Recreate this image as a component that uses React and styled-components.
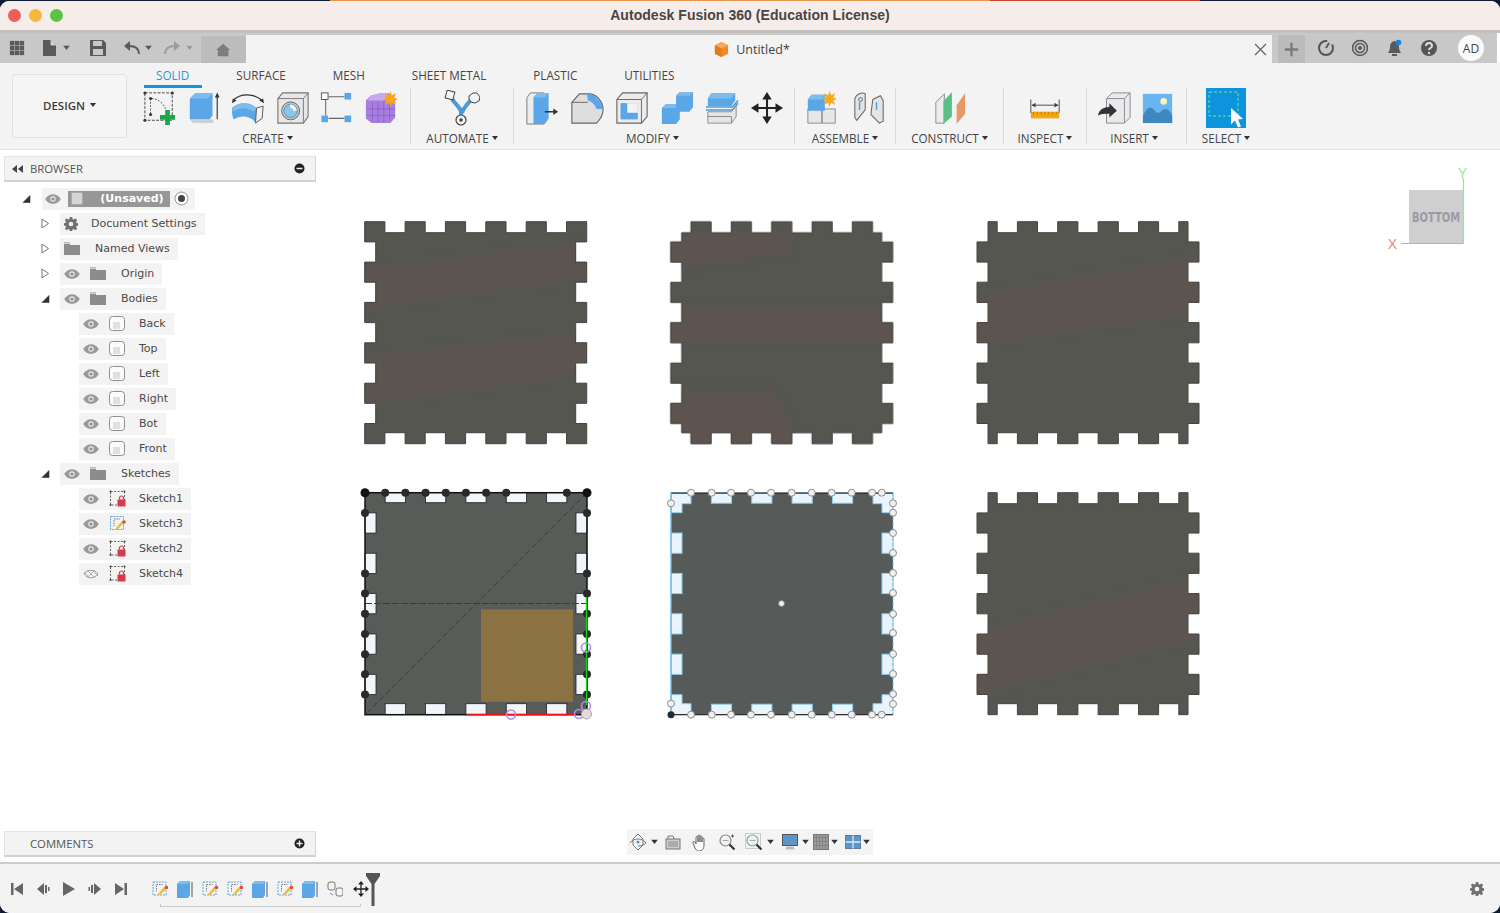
import React from "react";
import styled, { createGlobalStyle } from "styled-components";

const Global = createGlobalStyle`
  html, body { margin: 0; padding: 0; height: 100%; overflow: hidden; }
  body {
    background: linear-gradient(90deg, #0c1c33 0 22%, #e8964a 22% 66%, #c2452c 66% 80%, #0c1c33 80% 100%);
    font-family: "Open Sans", "Liberation Sans", sans-serif;
  }
  #root { height: 913px; }
`;

const Win = styled.div`
  width: 1500px; height: 912px; margin-top: 1px; display: flex; flex-direction: column;
  background: #fff; border-radius: 9px 9px 10px 10px; overflow: hidden;
`;
const TitleBar = styled.div`
  height: 29px; background: #f6edea; position: relative; display: flex; align-items: center; justify-content: center;
  border-bottom: 3px solid #c4c2c0;
`;
const Lights = styled.div`
  position: absolute; left: 8px; top: 8px; display: flex; gap: 8px;
`;
const Light = styled.span`
  width: 13px; height: 13px; border-radius: 50%; background: ${p => p.$c};
`;
const Title = styled.div`
  font: bold 14px "Liberation Sans", sans-serif; letter-spacing: .05px; color: #4a4542; margin-top: -2px;
`;
const TopRow = styled.div`
  height: 30px; display: flex; background: #c8c8c8; margin-right: 3px; box-shadow: 3px 0 0 #fff;
`;
const QuickBar = styled.div`
  width: 246px; display: flex; align-items: center; flex: none; position: relative;
`;
const QuickSlot = styled.span`
  position: absolute; left: ${p => p.$x}px; top: 50%; transform: translate(-50%, -50%); display: flex;
`;
const HomeTab = styled.div`
  position: absolute; left: 201px; width: 45px; top: 3px; bottom: 0; background: #bcbcbc; display: flex; align-items: center; justify-content: center;
`;
const DocTab = styled.div`
  flex: 1; margin-top: 2px; background: #f3f3f3; display: flex; align-items: center; justify-content: center; gap: 6px;
  position: relative; font-size: 12.5px; color: #444; padding-right: 15px;
`;
const CloseX = styled.span`
  position: absolute; right: 5px; top: 8px; display: flex;
`;
const RightBar = styled.div`
  width: 225px; position: relative; flex: none;
`;
const PlusTab = styled.div`
  position: absolute; left: 6px; width: 27px; top: 2px; bottom: 0; background: #bbb; display: flex; align-items: center; justify-content: center;
`;
const Avatar = styled.div`
  position: absolute; left: 186px; top: 2px; width: 26px; height: 26px; border-radius: 50%; background: #fafafa;
  display: flex; align-items: center; justify-content: center; font-size: 12px; color: #444;
`;
const Ribbon = styled.div`
  height: 87px; background: #f3f3f3; display: flex; flex: none; border-bottom: 1px solid #e6e6e6; box-sizing: border-box;
`;
const DesignBtn = styled.div`
  width: 113px; height: 60px; padding-bottom: 2px; margin: 11px 0 0 12px; border: 1px solid #e2e2e2; border-radius: 3px;
  display: flex; align-items: center; justify-content: center; gap: 5px; font-size: 11.5px; font-weight: 600; color: #3c3c3c; flex: none; background: #f5f5f5;
`;
const RibbonMain = styled.div`
  display: flex; flex-direction: column; margin-left: 13px;
`;
const Tabs = styled.div`
  display: flex; gap: 47px; height: 25px; padding: 5px 0 0 16px; box-sizing: border-box;
`;
const Tab = styled.span`
  font-size: 11.7px; line-height: 14px; color: ${p => p.$on ? "#1e9ad8" : "#444"}; position: relative; white-space: nowrap;
  ${p => p.$on && `&::after { content: ""; position: absolute; left: -12px; right: -13px; top: 17px; height: 3px; background: #0f96dc; }`}
`;
const Groups = styled.div`
  display: flex;
`;
const Group = styled.div`
  width: ${p => p.$w}px; box-sizing: border-box; height: 56px; display: flex; flex-direction: column; align-items: center;
  padding-right: ${p => p.$pr || 0}px;
  ${p => !p.$last && "border-right: 1px solid #d9d9d9;"}
`;
const GroupIcons = styled.div`
  height: 40px; flex: none; display: flex; gap: ${p => p.$gap || 11}px; align-items: center;
`;
const GroupLabel = styled.div`
  font-size: 11.7px; line-height: 14px; color: #444; margin-top: 3px; margin-right: ${p => p.$mr || 0}px; display: flex; align-items: center; gap: 3px; white-space: nowrap;
`;
const Caret = styled.i`
  display: inline-block; width: 0; height: 0; border-left: 3px solid transparent; border-right: 3px solid transparent; border-top: 4px solid #333;
`;
const Workspace = styled.div`
  flex: 1; position: relative; display: flex; flex-direction: column; justify-content: space-between; min-height: 0;
`;
const Viewport = styled.svg`
  position: absolute; left: 0; top: 0; width: 1500px; height: 712px;
`;
const Side = styled.div`
  position: relative; width: 312px; margin-left: 4px;
`;
const PanelHead = styled.div`
  height: 26px; background: #f3f3f3; border: 1px solid #e4e4e4; border-bottom: 2px solid #d2d2d2; border-right-color: #d2d2d2; box-sizing: border-box;
  display: flex; align-items: center; font-size: 11.3px; color: #555; padding: 0 10px 0 7px; margin-top: ${p => p.$top || 0}px; margin-bottom: ${p => p.$bottom || 0}px;
  position: relative;
`;
const HeadLabel = styled.span` margin-left: ${p => p.$ml}px; flex: 1; `;
const Tree = styled.div`
  margin: 4px 0 0 -4px; font: 11px "DejaVu Sans", sans-serif; color: #4a4a4a;
`;
const Row = styled.div`
  height: 25px; display: flex; align-items: center; padding-left: ${p => p.$indent}px;
`;
const ArrowSlot = styled.span`
  width: ${p => p.$w}px; display: flex; flex: none;
`;
const Chip = styled.div`
  height: 22px; background: #f3f3f3; display: flex; align-items: center; padding: 0 ${p => p.$pr || 8}px 0 ${p => p.$pl || 4}px; white-space: nowrap;
`;
const Label = styled.span` margin-left: ${p => p.$ml}px; `;
const IconGap = styled.span` display: flex; margin-left: ${p => p.$ml || 0}px; `;
const Unsaved = styled.span`
  margin-left: 7px; width: 102px; height: 16px; background: #979797; color: #fff; font-weight: bold; position: relative;
  display: flex; align-items: center; justify-content: center; padding-left: 26px; box-sizing: border-box;
`;
const UnsavedIcon = styled.span`
  position: absolute; left: 3px; top: 1px; width: 12px; height: 13px; background: #d5d5d5; border-radius: 2px; border: 1px solid #aaa; box-sizing: border-box;
`;
const NavBar = styled.div`
  position: absolute; left: 627px; top: 679px; width: 246px; height: 26px; background: #f4f4f4; display: block;
`;
const NavSlot = styled.span`
  position: absolute; left: ${p => p.$x}px; top: 13px; transform: translate(-50%, -50%); display: flex;
`;
const Timeline = styled.div`
  height: 51px; flex: none; background: #f3f3f3; border-top: 2px solid #cbcbcb; box-sizing: border-box; position: relative;
`;
const TimeTrack = styled.div`
  position: absolute; left: 160px; width: 201px; top: 40px; border: 1px solid #c9c9c9; border-top: 0; height: 3px; box-sizing: border-box;
`;
const TimeSlot = styled.span`
  position: absolute; left: ${p => p.$x}px; top: 25px; transform: translate(-50%, -50%); display: flex;
`;
const Marker = styled.span`
  position: absolute; left: 366px; top: 9px; display: flex;
`;

const Svg = ({ s = 34, w, h, vb, children }) => (
  <svg width={w || s} height={h || s} viewBox={vb || `0 0 ${w || s} ${h || s}`} style={{ display: "block", flex: "none" }}>{children}</svg>
);

/* ---- Ribbon icons ---- */
const I = ({ children }) => <Svg s={34} vb="0 0 36 36">{children}</Svg>;
const BL = "#5aa6e6";
const BL2 = "#7dbdec";
const IconSketch = () => (
  <I>
    <rect x="2" y="2" width="29" height="29" fill="none" stroke="#444" strokeWidth="1" strokeDasharray="3 1.5" />
    <path d="M8 8v17h1M8 25 M9 8c8 0 14 7 15 12" fill="none" stroke="#555" strokeDasharray="2 1.5" />
    {[[2,2],[31,2],[2,31],[8,8],[8,25]].map(([x,y],i)=><circle key={i} cx={x} cy={y} r="1.6" fill="#333"/>)}
    <path d="M23.5 20h5v5.5h5.5v5h-5.5v5.500h-5v-5.500H18v-5h5.500z" fill="#18a84a" />
  </I>
);
const IconExtrude = () => (
  <I>
    <path d="M3 30l3 4h22v-4z" fill="#cfcfcf" />
    <path d="M3 8l6-6h18v24l-3 4H3z" fill={BL} />
    <path d="M3 8l6-6h18l-5 6z" fill={BL2} />
    <path d="M32 30V5" stroke="#333" strokeWidth="1.2" />
    <path d="M29.500 7L32 1.500 34.500 7z" fill="#333" />
  </I>
);
const IconSweep = () => (
  <I>
    <path d="M2 10C10 2 24 2 33 10" fill="none" stroke="#333" strokeWidth="1.300" />
    <path d="M1 13l1-5 4 2zM35 13l-1-5-4 2z" fill="#333" />
    <path d="M1 18c7-7 20-7 27 1l-2 15C22 26 10 25 3 30c-2-3-2-9-2-12z" fill={BL} />
    <path d="M1 18c7-7 20-7 27 1l-5 3c-5-5-14-5-21 0z" fill={BL2} />
    <path d="M27 18l7-2-1 13-7 5z" fill="#f4f4f4" stroke="#555" />
  </I>
);
const IconHole = () => (
  <I>
    <path d="M2 8l5-6h27v25l-5 7H2z" fill="#e7e7e7" stroke="#777" strokeWidth="1.200" />
    <path d="M2 8h27v26M29 8l5-6" fill="none" stroke="#777" />
    <circle cx="15.500" cy="21" r="9.500" fill="#c6c6c6" stroke="#666" />
    <circle cx="15.500" cy="21" r="7" fill="#8fc4ea" stroke="#4a8fc5" />
    <path d="M15 14a7 7 0 017 7h-4c0-2-1-3-3-3z" fill="#f2f2f2" />
  </I>
);
const IconBoxes = () => (
  <I>
    <path d="M9 6h17M6 9v17M9 29h17" stroke="#666" strokeWidth="1.100" />
    <rect x="1.500" y="2" width="7" height="7" fill="#fff" stroke="#555" />
    <rect x="26" y="2" width="7" height="7" fill={BL} />
    <rect x="1.500" y="26" width="7" height="7" fill={BL} />
    <rect x="26" y="26" width="7" height="7" fill={BL} />
  </I>
);
const IconForm = () => (
  <I>
    <path d="M7 5l11-3h8l7 8v18l-5 6H8l-6-5V10z" fill="#a77fe0" />
    <path d="M9 12v20M15 11v22M21 11v22M27 13v18M3 19h30M3 26h30" stroke="#8a5fc9" strokeWidth=".9" />
    <path d="M7 5l11-3h8l-4 8H4z" fill="#c8a9f0" />
    <path d="M28 0l1.500 4.500L34 2.500 32 7l4 1.500L32 10l2 4.500-4.500-2L28 17l-1.500-4.500-4.500 2L24 10l-4-1.500L24 7l-2-4.500 4.500 2z" fill="#f7a81b" />
  </I>
);
const IconAutomate = () => (
  <Svg s={36} vb="0 0 36 36">
    <path d="M7 7c4 8 9 9 10 15M28 8c-5 8-8 8-10 15" fill="none" stroke="#4d9ad8" strokeWidth="4" />
    <path d="M17 21v8" stroke="#4d9ad8" strokeWidth="4" />
    <rect x="2" y="1" width="8" height="8" fill="#f4f4f4" stroke="#444" transform="rotate(15 6 5)" />
    <path d="M25 6l4-3h4l3 4-1 4-4 2-4-1-2-3z" fill="#f4f4f4" stroke="#444" />
    <circle cx="17" cy="30" r="5" fill="#f4f4f4" stroke="#444" strokeWidth="1.200" />
    <circle cx="17" cy="30" r="1.800" fill="#444" />
  </Svg>
);
const IconPress = () => (
  <I>
    <path d="M2 7l4-5h14v33H2z" fill="#ececec" stroke="#777" />
    <path d="M9 7l4-5h12v27l-4 6H9z" fill={BL} />
    <path d="M9 7l4-5h12l-4 5z" fill={BL2} />
    <path d="M21 22h11" stroke="#333" strokeWidth="1.500" />
    <path d="M30 18.500l5 3.500-5 3.500z" fill="#333" />
  </I>
);
const IconFillet = () => (
  <I>
    <path d="M2 12L10 3h10c8 0 15 8 15 17 0 4-2 9-7 14H2z" fill="#dedede" stroke="#666" strokeWidth="1.200" />
    <path d="M18 3c8 0 16 8 17 16h-7c-1-4-5-8-9-9z" fill={BL} />
    <path d="M2 12h17" stroke="#666" />
  </I>
);
const IconShell = () => (
  <I>
    <path d="M2 9l6-7h26v25l-6 7H2z" fill="#ececec" stroke="#666" strokeWidth="1.200" />
    <path d="M2 9h26v25M28 9l6-7" fill="none" stroke="#666" />
    <rect x="6" y="13" width="18" height="17" fill={BL2} />
    <path d="M6 13h7v10h11v7H6z" fill={BL} />
    <rect x="13" y="13" width="11" height="10" fill="#f2f2f2" />
  </I>
);
const IconCombine = () => (
  <I>
    <path d="M2 18l4-4h11V5l4-4h14v16l-4 5H21v8l-4 5H2z" fill={BL} />
    <path d="M17 5l4-4h14l-4 4zM2 18l4-4h11v4z" fill={BL2} />
  </I>
);
const IconSplit = () => (
  <I>
    <path d="M3 8l4-6h25v8l-4 6H3z" fill={BL} />
    <path d="M3 8l4-6h25l-4 6z" fill={BL2} />
    <path d="M1 17h28l6-7M1 20h28l6-7" fill="none" stroke="#4d9ad8" strokeWidth="1.600" />
    <path d="M3 22h25l5-6v11l-5 7H3z" fill="#e6e6e6" stroke="#888" />
    <path d="M3 27h25v7" fill="none" stroke="#888" />
  </I>
);
const IconMove = () => (
  <I>
    <path d="M18 7v22M7 18h22" stroke="#222" strokeWidth="2.200" />
    <path d="M18 1l5 8h-10zM18 35l5-8h-10zM1 18l8-5v10zM35 18l-8-5v10z" fill="#222" />
  </I>
);
const IconNewComp = () => (
  <I>
    <path d="M3 19h15v15H3zM18 19h14v15H18z" fill="#e7e7e7" stroke="#888" />
    <path d="M3 9l4-5h14v17H3z" fill={BL} />
    <path d="M3 9l4-5h14l-3 5z" fill={BL2} />
    <path d="M26 0l1.500 4.500L32 2.500 30 7l4 1.500L30 10l2 4.500-4.500-2L26 17l-1.500-4.500-4.500 2L22 10l-4-1.500L22 7l-2-4.500 4.500 2z" fill="#f7a81b" />
  </I>
);
const IconJoint = () => (
  <I>
    <path d="M3 9c1-6 8-8 11-6v17l-9 11-2-3z" fill="#e4e4e4" stroke="#666" strokeWidth="1.100" />
    <path d="M22 9l8-4 3 5v22l-4 2-9-9z" fill="#e4e4e4" stroke="#666" strokeWidth="1.100" />
    <path d="M8 12v8M26 12v8" stroke="#4d9ad8" strokeWidth="1.500" />
    <circle cx="9" cy="9" r="2" fill="none" stroke="#666" />
  </I>
);
const IconPlane = () => (
  <I>
    <path d="M3 12l9-9v31H3z" fill="#ececec" stroke="#888" />
    <path d="M11 11l9-10v26l-9 8z" fill="#5abf84" />
    <path d="M25 15l9-13v22l-9 11z" fill="#e59a66" />
  </I>
);
const IconMeasure = () => (
  <I>
    <rect x="3" y="22" width="30" height="7" fill="#f3a712" />
    <path d="M6 22v3M10 22v3M14 22v3M18 22v3M22 22v3M26 22v3M30 22v3" stroke="#b97b00" />
    <path d="M3 9v14M33 9v14M4 15h28" stroke="#444" />
    <path d="M4 15l4-2.500v5zM32 15l-4-2.500v5z" fill="#444" />
  </I>
);
const IconDerive = () => (
  <I>
    <path d="M9 8l6-6h19v26l-6 6H9z" fill="#e9e9ee" stroke="#888" />
    <path d="M9 8h19v26M28 8l6-6" fill="none" stroke="#888" />
    <path d="M0 26c1-6 6-9 12-9v-4l8 8-8 7v-4c-5 0-9 0-12 2z" fill="#333" />
  </I>
);
const IconImage = () => (
  <I>
    <rect x="2" y="3" width="31" height="31" fill="#68b6f0" />
    <circle cx="24" cy="11" r="3.500" fill="#fdf3b8" />
    <path d="M2 27c4-10 8-12 12-7 3 4 5 4 8 1 4-4 8-2 11 5v8H2z" fill="#3f87bf" />
  </I>
);
const IconSelect = () => (
  <Svg s={40} vb="0 0 40 40">
    <rect width="40" height="40" fill="#0c94dc" />
    <rect x="3" y="4" width="29" height="24" fill="none" stroke="#7ed6a0" strokeWidth="1" strokeDasharray="3 2" />
    <path d="M25 20l12 11-5 .5 3 7-3 1-3-7-4 4z" fill="#fff" />
  </Svg>
);

/* ---- Quick bar ---- */
const Icon = ({ s = 18, children }) => <Svg s={s} vb="0 0 18 18">{children}</Svg>;
const IGrid = () => (
  <Icon s={16}>
    {[1, 6.500, 12].map(x => [1, 6.500, 12].map(y => <rect key={x + "-" + y} x={x} y={y} width="5" height="5" fill="#5a5a5a" />))}
  </Icon>
);
const IFile = () => <Icon><path d="M2 1h8l5 5v11H2z" fill="#5a5a5a" /><path d="M10 1v5h5" fill="#ddd" stroke="#c8c8c8" /></Icon>;
const ISave = () => (
  <Icon><path d="M1 1h13l3 3v13H1z" fill="#5a5a5a" /><rect x="4" y="2" width="9" height="5" fill="#c8c8c8" /><rect x="4" y="10" width="10" height="6" fill="#c8c8c8" /></Icon>
);
const IUndo = () => <Icon><path d="M16 15c0-5-3-8-10-8" fill="none" stroke="#5a5a5a" strokeWidth="2" /><path d="M7 2L1 7l6 5z" fill="#5a5a5a" /></Icon>;
const IRedo = () => <Icon><path d="M2 15c0-5 3-8 10-8" fill="none" stroke="#9c9c9c" strokeWidth="2" /><path d="M11 2l6 5-6 5z" fill="#9c9c9c" /></Icon>;
const IHome = () => <Icon s={16}><path d="M8 2l8 7h-2v7H2V9H0z" fill="#7d7d7d" /></Icon>;
const QCaret = ({ c = "#555" }) => <Svg w={8} h={5}><path d="M0 0h7L3.500 4.500z" fill={c} /></Svg>;
const ICube = () => (
  <Icon s={17}><path d="M9 1l7 3.500v9L9 17l-7-3.500v-9z" fill="#ef8a2c" /><path d="M9 1l7 3.500L9 8 2 4.500z" fill="#f7a95f" /><path d="M9 8v9L2 13.500v-9z" fill="#e47a1c" /></Icon>
);
const IX = () => <Svg s={13} vb="0 0 12 12"><path d="M1 1l10 10M11 1L1 11" stroke="#666" strokeWidth="1.200" /></Svg>;
const IPlus = () => <Icon s={15}><path d="M9 1v16M1 9h16" stroke="#7a7a7a" strokeWidth="2.800" /></Icon>;
const IGauge = () => <Icon><circle cx="9" cy="9" r="7" fill="none" stroke="#555" strokeWidth="2" strokeDasharray="34 6" /><path d="M9 9l3-5" stroke="#555" strokeWidth="1.800" /></Icon>;
const ICloud = () => <Icon><circle cx="9" cy="9" r="7.500" fill="none" stroke="#555" strokeWidth="1.500" /><circle cx="9" cy="9" r="4.500" fill="none" stroke="#555" strokeWidth="1.500" /><circle cx="9" cy="9" r="2" fill="#555" /></Icon>;
const IBell = () => <Icon><path d="M8 2c-3 1-4 3-4 6 0 3-1 4-2 6h13c-1-2-2-3-2-6 0-3-1-5-4-6z" fill="#5a5a5a" /><rect x="6" y="15" width="5" height="2" fill="#5a5a5a" /><circle cx="12.500" cy="3.500" r="2.800" fill="#1584e0" /></Icon>;
const IHelp = () => (
  <Icon><circle cx="9" cy="9" r="8" fill="#555" /><path d="M6 7c0-4 6-4 6 0 0 2-3 2-3 4" fill="none" stroke="#ddd" strokeWidth="2" /><circle cx="9" cy="14" r="1.200" fill="#ddd" /></Icon>
);

/* ---- Tree icons ---- */
const Eye = ({ off }) => (
  <Svg w={16} h={10} vb="0 0 16 10">
    {off ? (
      <>
        <path d="M1 5c3-5 11-5 14 0-3 5-11 5-14 0z" fill="none" stroke="#a0a0a0" />
        <path d="M4 1l8 8M12 1L4 9M1 3l6 6M9 1l6 6" stroke="#aeaeae" strokeWidth=".9" />
      </>
    ) : (
      <>
        <path d="M.2 5c3.600-6.500 12-6.500 15.600 0-3.600 6.500-12 6.500-15.600 0z" fill="#9a9a9a" />
        <circle cx="8" cy="5" r="2.700" fill="#ececec" />
        <circle cx="8" cy="5" r="1.600" fill="#8e8e8e" />
      </>
    )}
  </Svg>
);
const Folder = () => <Svg w={16} h={13} vb="0 0 16 13"><path d="M0 2h6v1h10v10H0z" fill="#8c8c8c" /><path d="M0 0h6v1.500H0z" fill="#b9b9b9" /></Svg>;
const Gear = () => (
  <Svg w={14} h={14} vb="0 0 14 14">
    <path fillRule="evenodd" d="M5.800 0h2.400l.3 2 1.300.6L11.500 1.400l1.700 1.700L12 4.700l.5 1.300 1.500.3v2.400l-1.500.3L12 10l1.200 1.600-1.700 1.700-1.700-1.200-1.300.5-.3 1.500H5.800l-.3-1.500-1.300-.5L2.500 13.300.8 11.600 2 10l-.5-1.300L0 8.700V6.300L1.500 6 2 4.700.8 3.100l1.700-1.700 1.700 1.200 1.300-.6zM7 4.700a2.300 2.300 0 100 4.600 2.300 2.300 0 000-4.600z" fill="#707070" />
  </Svg>
);
const Body = () => (
  <Svg w={16} h={15} vb="0 0 16 15">
    <rect x=".5" y=".5" width="15" height="14" rx="3" fill="#fbfbfb" stroke="#8f8f8f" />
    <rect x="4" y="6" width="7" height="7" fill="#e0e0e0" />
  </Svg>
);
const SketchLock = () => (
  <Svg w={17} h={17} vb="0 0 17 17">
    <rect x="1.500" y="1.500" width="14" height="13.500" fill="none" stroke="#666" strokeDasharray="2 1.500" />
    {[[1.500,1.500],[15.500,1.500],[1.500,15]].map(([x,y],i)=><circle key={i} cx={x} cy={y} r="1" fill="#444"/>)}
    <path d="M10.500 9.500V8a2 2 0 014 0v1.500" fill="none" stroke="#d23a48" strokeWidth="1.200" />
    <rect x="8.500" y="9.500" width="8" height="7" fill="#d9394a" />
  </Svg>
);
const SketchEdit = ({ s = 17 }) => (
  <Svg s={s} vb="0 0 17 17">
    <rect x="1.500" y="1.500" width="13" height="13" fill="none" stroke="#5aa7de" strokeDasharray="2 1" />
    <path d="M5 4h6M5 5v6" stroke="#777" strokeDasharray="1.500 1" />
    <path d="M7 13l6-7 2 2-6 6-3 1z" fill="#eeba38" />
    <circle cx="15" cy="7" r="1.800" fill="#e14b3c" />
  </Svg>
);
const Tri = ({ open, dark }) => (
  <Svg w={9} h={11} vb="0 0 9 11">
    {open
      ? <path d="M1 9.500L8 2.500v7z" fill={dark ? "#222" : "#333"} stroke="#333" strokeWidth=".6" />
      : <path d="M1 1l6.500 4.500L1 10z" fill="#fff" stroke="#777" />}
  </Svg>
);
const Radio = () => (
  <Svg s={15} vb="0 0 15 15">
    <circle cx="7.500" cy="7.500" r="6.500" fill="#fff" stroke="#999" />
    <circle cx="7.500" cy="7.500" r="3.500" fill="#444" />
  </Svg>
);
const RoundBtn = ({ plus }) => (
  <Svg s={11} vb="0 0 11 11">
    <circle cx="5.500" cy="5.500" r="5" fill="#222" />
    <path d={plus ? "M2.500 5.500h6M5.500 2.500v6" : "M2.500 5.500h6"} stroke="#eee" strokeWidth="1.400" />
  </Svg>
);

/* ---- Timeline icons ---- */
const TBlock = () => (
  <Svg w={16} h={18} vb="0 0 16 18">
    <path d="M0 4l3-3h10v14l-2 3H0z" fill={BL} />
    <path d="M0 4l3-3h10l-2 3z" fill={BL2} />
    <path d="M15 2v15" stroke="#555" />
  </Svg>
);
const TMove = () => (
  <Svg s={16} vb="0 0 16 16">
    <path d="M8 3v10M3 8h10" stroke="#222" strokeWidth="1.300" />
    <path d="M8 0l3 3.500H5zM8 16l3-3.500H5zM0 8l3.500-3v6zM16 8l-3.500-3v6z" fill="#222" />
  </Svg>
);
const TJoint = () => (
  <Svg s={16} vb="0 0 16 16">
    <rect x="1" y="1" width="7" height="8" rx="2" fill="#f4f4f4" stroke="#777" />
    <rect x="9" y="7" width="7" height="8" rx="2" fill="#f4f4f4" stroke="#777" />
    <path d="M3 12l3 2" stroke="#4d9ad8" />
  </Svg>
);
const Ctl = ({ d, x }) => (
  <TimeSlot $x={x}><Svg s={14} vb="0 0 14 14"><path d={d} fill="#666" /></Svg></TimeSlot>
);

/* ---- Nav icons ---- */
const NOrbit = () => (
  <Svg s={18} vb="0 0 18 18">
    <path d="M9 1l5 5v6l-5 5-5-5V6z" fill="#f8f8f8" stroke="#777" />
    <path d="M1 10c2-3 5-4 8-4s6 1 8 4c-2 2-5 3-8 3" fill="none" stroke="#777" />
    <circle cx="9" cy="9" r="1.600" fill="#4d9ad8" />
  </Svg>
);
const NLook = () => (
  <Svg s={16} vb="0 0 16 16">
    <rect x="1" y="5" width="14" height="10" fill="#cfcfcf" stroke="#777" />
    <path d="M3 5V2h5l1 3" fill="none" stroke="#777" />
    <path d="M3 8h10M3 10h10M3 12h10" stroke="#8a8a8a" />
  </Svg>
);
const NHand = () => (
  <Svg s={18} vb="0 0 18 18">
    <path d="M5 11V4.500a1 1 0 012 0V9 3a1 1 0 012 0v6-5a1 1 0 012 0v5-3a1 1 0 012 0v6c0 4-2 6-5 6-2 0-3-1-4-3L2 10c-.5-1.500 1-2 2-1z" fill="#fafafa" stroke="#666" strokeWidth="1" />
  </Svg>
);
const NZoom = ({ sq }) => (
  <Svg s={19} vb="0 0 19 19">
    {sq && <rect x="1" y="1" width="15" height="15" fill="none" stroke="#ccc" />}
    <circle cx="8" cy="8" r="5.500" fill="#eef4f0" stroke={sq ? "#7aa98a" : "#888"} strokeWidth="1.200" />
    <path d="M12 12l5 5" stroke="#333" strokeWidth="2.200" />
    {!sq && <path d="M15 2v3M13.500 3.500h3" stroke="#555" />}
    <path d="M5 8h6" stroke="#aaa" />
  </Svg>
);
const NDisplay = () => (
  <Svg s={17} vb="0 0 17 17">
    <rect x="1" y="1" width="15" height="11" fill="#5c95c9" stroke="#555" />
    <path d="M5 13h7l1 3H4z" fill="#bbb" />
  </Svg>
);
const NGrid = () => (
  <Svg s={17} vb="0 0 17 17">
    <rect x="1" y="1" width="15" height="15" fill="#9b9b9b" stroke="#777" />
    <path d="M4 1v15M7 1v15M10 1v15M13 1v15M1 4h15M1 8h15M1 12h15" stroke="#7b7b7b" strokeWidth=".7" />
  </Svg>
);
const NViews = () => (
  <Svg s={17} vb="0 0 17 17">
    <rect x="1" y="2" width="15" height="13" fill="#5c95c9" stroke="#5c7da0" />
    <path d="M8.500 2v13M1 8.500h15" stroke="#dbe7f2" strokeWidth="1.300" />
  </Svg>
);

/* ---- Model drawing ---- */
const SIZE = 222;
const DEPTH = 11;
const CELL = SIZE / 11;
function outline(topEven, sideEven) {
  const isT = i => (i % 2 === 0) === topEven;
  const isS = i => (i % 2 === 0) === sideEven;
  const hi = sideEven ? 0 : DEPTH;
  const vi = topEven ? 0 : DEPTH;
  const top = [], right = [], bottom = [], left = [];
  for (let i = 0; i < 11; i++) {
    const x0 = i === 0 ? hi : i * CELL;
    const x1 = i === 10 ? SIZE - hi : (i + 1) * CELL;
    const y0 = i === 0 ? vi : i * CELL;
    const y1 = i === 10 ? SIZE - vi : (i + 1) * CELL;
    const ty = isT(i) ? 0 : DEPTH;
    const sx = isS(i) ? 0 : DEPTH;
    top.push([x0, ty], [x1, ty]);
    bottom.push([x0, SIZE - ty], [x1, SIZE - ty]);
    left.push([sx, y0], [sx, y1]);
    right.push([SIZE - sx, y0], [SIZE - sx, y1]);
  }
  const pts = [...top, ...right, ...bottom.reverse(), ...left.reverse()];
  return "M" + pts.map(p => p[0].toFixed(1) + " " + p[1].toFixed(1)).join("L") + "Z";
}
const Panel = ({ id, x, y, topEven, sideEven, bands }) => {
  const d = outline(topEven, sideEven);
  return (
    <g transform={`translate(${x} ${y})`}>
      <clipPath id={id}><path d={d} /></clipPath>
      <path d={d} fill="#565650" />
      <g clipPath={`url(#${id})`}>
        <g filter="url(#soft)">
          {bands.map((b, i) => <polygon key={i} points={b} fill="#5e534f" opacity=".85" />)}
        </g>
      </g>
      <path d={d} fill="none" stroke="#434340" strokeWidth="1" />
    </g>
  );
};

const SketchPanel = () => {
  const x0 = 365, y0 = 492.700;
  const odd = [1, 3, 5, 7, 9];
  const topDots = [1, 2, 3, 4, 5, 6, 7, 10];
  const sideDots = [1, 4, 5, 6, 7, 8, 9, 10];
  return (
    <g>
      <rect x={x0} y={y0} width={SIZE} height={SIZE} fill="#575c59" />
      {odd.map(i => (
        <g key={i} fill="#f2f6fa" stroke="#222" strokeWidth=".8">
          <rect x={x0 + i * CELL} y={y0} width={CELL} height={10} />
          <rect x={x0 + i * CELL} y={y0 + SIZE - 11} width={CELL} height={11} />
          <rect x={x0} y={y0 + i * CELL} width={11} height={CELL} />
          <rect x={x0 + SIZE - 11} y={y0 + i * CELL} width={11} height={CELL} />
        </g>
      ))}
      <rect x="481" y="609.300" width="92" height="92.500" fill="#8b7243" />
      <path d={`M${x0} 603.500H${x0 + SIZE}`} stroke="#3a3d3b" strokeDasharray="7 2" />
      <path d={`M${x0 + SIZE} ${y0}L${x0} ${y0 + SIZE}`} stroke="#3a3d3b" strokeDasharray="6 3" />
      <rect x={x0} y={y0} width={SIZE} height={SIZE} fill="none" stroke="#111" strokeWidth="1.500" />
      {topDots.map(i => <circle key={i} cx={x0 + i * CELL} cy={y0} r="4" fill="#2a2a2a" />)}
      {sideDots.map(i => (
        <g key={i} fill="#2a2a2a">
          <circle cx={x0} cy={y0 + i * CELL} r="4" />
          <circle cx={x0 + SIZE} cy={y0 + i * CELL} r="4" />
        </g>
      ))}
      <circle cx={x0} cy={y0} r="4.500" fill="#111" />
      <circle cx={x0 + SIZE} cy={y0} r="4.500" fill="#111" />
      <path d="M467 714.500H575" stroke="#f01414" strokeWidth="1.500" />
      <path d="M586.500 597V705" stroke="#12d812" strokeWidth="1.300" />
      <g fill="none" stroke="#b48bea" strokeWidth="1.600">
        <circle cx="511" cy="714.500" r="4.500" />
        <circle cx="586" cy="647.500" r="4.500" />
        <circle cx="586" cy="706" r="4.500" />
        <circle cx="579" cy="714" r="4.500" />
      </g>
      <circle cx="586.500" cy="714" r="5" fill="#e4dcda" stroke="#aaa" />
    </g>
  );
};

const SelPanel = () => {
  const x0 = 671, y0 = 492.700;
  const even = [2, 4, 6, 8];
  const xs = [691, 711.700, 731, 751, 771, 791.700, 811.700, 831.700, 851.700, 872, 881.700];
  const ys = [503.300, 512.700, 533, 553, 573, 593, 614, 633, 654, 674, 694, 704];
  const Dot = ({ cx, cy }) => <circle cx={cx} cy={cy} r="3.500" fill="#f0f0f0" stroke="#8e8e8e" />;
  return (
    <g>
      <rect x={x0} y={y0} width={SIZE} height={SIZE} fill="#565a58" />
      <g fill="#e9f4fc" stroke="#8ccdef" strokeWidth="1">
        {even.map(i => (
          <g key={i}>
            <rect x={x0 + i * CELL} y={y0} width={CELL} height={10.500} />
            <rect x={x0 + i * CELL} y={y0 + SIZE - 10.500} width={CELL} height={10.500} />
            <rect x={x0} y={y0 + i * CELL} width={11} height={CELL} />
            <rect x={x0 + SIZE - 11} y={y0 + i * CELL} width={11} height={CELL} />
          </g>
        ))}
        <path d={`M${x0} ${y0}h20v11h-9v9h-11z`} />
        <path d={`M${x0 + SIZE} ${y0}h-20v11h9v9h11z`} />
        <path d={`M${x0} ${y0 + SIZE}h20v-11h-9v-9h-11z`} />
        <path d={`M${x0 + SIZE} ${y0 + SIZE}h-20v-11h9v-9h11z`} />
      </g>
      <path d={`M${x0} ${y0 + 0.5}h${SIZE}M${x0} ${y0 + SIZE}h${SIZE}`} stroke="#2e2e2e" strokeWidth="1.200" />
      <path d={`M${x0} ${y0}v${SIZE}`} stroke="#69b9ea" strokeWidth="1.400" />
      <path d={`M${x0 + SIZE} ${y0}v${SIZE}`} stroke="#69b9ea" strokeWidth="1" strokeDasharray="3 2" />
      {xs.map(x => <g key={x}><Dot cx={x} cy={y0} /><Dot cx={x} cy={y0 + SIZE} /></g>)}
      {ys.map(y => <Dot key={y} cx={x0 + SIZE} cy={y} />)}
      <Dot cx={x0} cy={503.300} />
      <Dot cx={x0} cy={703.600} />
      <circle cx={x0} cy={y0 + SIZE} r="3.500" fill="#2a2a2a" />
      <circle cx="781.500" cy="603.500" r="3" fill="#eee" stroke="#777" strokeWidth=".8" />
    </g>
  );
};

const ViewCube = () => (
  <g>
    <rect x="1409" y="190" width="54" height="53" fill="#cfcfcf" />
    <text x="1436" y="222" textAnchor="middle" fontFamily="DejaVu Sans Condensed, DejaVu Sans, sans-serif" fontWeight="bold" fontSize="14.500" fill="#9a9aa6" textLength="48" lengthAdjust="spacingAndGlyphs">BOTTOM</text>
    <path d="M1463.500 178V243.500" stroke="#8fe98f" strokeWidth="1.200" />
    <path d="M1401 243.500H1463.500" stroke="#ee9a9a" strokeWidth="1.200" />
    <text x="1462.500" y="178" textAnchor="middle" fontFamily="Liberation Sans, sans-serif" fontSize="14" fill="#8fe98f">Y</text>
    <text x="1392.500" y="249" textAnchor="middle" fontFamily="Liberation Sans, sans-serif" fontSize="14" fill="#f08585">X</text>
  </g>
);

const BODIES = ["Back", "Top", "Left", "Right", "Bot", "Front"];
const SKETCHES = [
  ["Sketch1", false, false],
  ["Sketch3", true, false],
  ["Sketch2", false, false],
  ["Sketch4", false, true],
];
const Q = [
  [17, <IGrid />], [50, <IFile />], [67, <QCaret />], [98, <ISave />],
  [132, <IUndo />], [149, <QCaret />], [172, <IRedo />], [190, <QCaret c="#999" />],
];
const TL = [
  [160, <SketchEdit />], [185, <TBlock />], [210, <SketchEdit />], [235, <SketchEdit />], [260, <TBlock />],
  [285, <SketchEdit />], [310, <TBlock />], [335, <TJoint />], [361, <TMove />],
];
const NAV = [
  [11, <NOrbit />], [28, <QCaret c="#333" />], [46, <NLook />], [73, <NHand />], [100, <NZoom />], [127, <NZoom sq />], [144, <QCaret c="#333" />],
  [163, <NDisplay />], [179, <QCaret c="#333" />], [194, <NGrid />], [208, <QCaret c="#333" />], [226, <NViews />], [240, <QCaret c="#333" />],
];

export default function App() {
  return (
    <>
      <Global />
      <Win>
        <TitleBar>
          <Lights>
            <Light $c="#ee5f57" />
            <Light $c="#f5b73d" />
            <Light $c="#5cc244" />
          </Lights>
          <Title>Autodesk Fusion 360 (Education License)</Title>
        </TitleBar>
        <TopRow>
          <QuickBar>
            {Q.map(([x, ic]) => <QuickSlot key={x} $x={x}>{ic}</QuickSlot>)}
            <HomeTab><IHome /></HomeTab>
          </QuickBar>
          <DocTab>
            <ICube />
            <span>Untitled*</span>
            <CloseX><IX /></CloseX>
          </DocTab>
          <RightBar>
            <PlusTab><IPlus /></PlusTab>
            <QuickSlot $x={54}><IGauge /></QuickSlot>
            <QuickSlot $x={88}><ICloud /></QuickSlot>
            <QuickSlot $x={123}><IBell /></QuickSlot>
            <QuickSlot $x={157}><IHelp /></QuickSlot>
            <Avatar>AD</Avatar>
          </RightBar>
        </TopRow>
        <Ribbon>
          <DesignBtn>DESIGN <Caret /></DesignBtn>
          <RibbonMain>
            <Tabs>
              <Tab $on>SOLID</Tab>
              <Tab>SURFACE</Tab>
              <Tab>MESH</Tab>
              <Tab>SHEET METAL</Tab>
              <Tab>PLASTIC</Tab>
              <Tab>UTILITIES</Tab>
            </Tabs>
            <Groups>
              <Group $w={271} $pr={9}>
                <GroupIcons $gap={10.4}>
                  <IconSketch /><IconExtrude /><IconSweep /><IconHole /><IconBoxes /><IconForm />
                </GroupIcons>
                <GroupLabel $mr={6}>CREATE <Caret /></GroupLabel>
              </Group>
              <Group $w={103}>
                <GroupIcons><IconAutomate /></GroupIcons>
                <GroupLabel>AUTOMATE <Caret /></GroupLabel>
              </Group>
              <Group $w={281}>
                <GroupIcons>
                  <IconPress /><IconFillet /><IconShell /><IconCombine /><IconSplit /><IconMove />
                </GroupIcons>
                <GroupLabel $mr={3}>MODIFY <Caret /></GroupLabel>
              </Group>
              <Group $w={101}>
                <GroupIcons $gap={13}><IconNewComp /><IconJoint /></GroupIcons>
                <GroupLabel>ASSEMBLE <Caret /></GroupLabel>
              </Group>
              <Group $w={108}>
                <GroupIcons><IconPlane /></GroupIcons>
                <GroupLabel>CONSTRUCT <Caret /></GroupLabel>
              </Group>
              <Group $w={83}>
                <GroupIcons><IconMeasure /></GroupIcons>
                <GroupLabel>INSPECT <Caret /></GroupLabel>
              </Group>
              <Group $w={100}>
                <GroupIcons $gap={9}><IconDerive /><IconImage /></GroupIcons>
                <GroupLabel $mr={5}>INSERT <Caret /></GroupLabel>
              </Group>
              <Group $w={78} $last>
                <GroupIcons><IconSelect /></GroupIcons>
                <GroupLabel>SELECT <Caret /></GroupLabel>
              </Group>
            </Groups>
          </RibbonMain>
        </Ribbon>
        <Workspace>
          <Viewport viewBox="0 150 1500 712">
            <defs>
              <filter id="soft" x="-20%" y="-20%" width="140%" height="140%"><feGaussianBlur stdDeviation="3" /></filter>
            </defs>
            <Panel id="p1" x={364.700} y={221.700} topEven sideEven bands={["-20,52 242,18 242,53 -20,88", "-20,138 242,110 242,148 -20,185"]} />
            <Panel id="p2" x={670.700} y={221.700} topEven={false} sideEven={false} bands={["-20,82 242,82 242,122 -20,122", "-20,168 100,168 145,242 -20,242", "-20,10 120,10 120,30 -20,50"]} />
            <Panel id="p3" x={977} y={221.700} topEven sideEven={false} bands={["-20,78 242,32 242,87 -20,125"]} />
            <SketchPanel />
            <SelPanel />
            <Panel id="p6" x={977} y={492.700} topEven sideEven={false} bands={["-20,145 242,80 242,140 -20,205"]} />
            <ViewCube />
          </Viewport>
          <Side>
            <PanelHead $top={6}>
              <Svg w={11} h={8} vb="0 0 11 8"><path d="M5 0v8L0 4zM11 0v8L6 4z" fill="#444" /></Svg>
              <HeadLabel $ml={7}>BROWSER</HeadLabel>
              <RoundBtn />
            </PanelHead>
            <Tree>
              <Row $indent={22}>
                <ArrowSlot $w={20}><Tri open /></ArrowSlot>
                <Chip $pl={3} $pr={6}>
                  <Eye />
                  <Unsaved><UnsavedIcon />(Unsaved)</Unsaved>
                  <IconGap $ml={4}><Radio /></IconGap>
                </Chip>
              </Row>
              <Row $indent={41}>
                <ArrowSlot $w={19}><Tri /></ArrowSlot>
                <Chip><Gear /><Label $ml={13}>Document Settings</Label></Chip>
              </Row>
              <Row $indent={41}>
                <ArrowSlot $w={19}><Tri /></ArrowSlot>
                <Chip><Folder /><Label $ml={15}>Named Views</Label></Chip>
              </Row>
              <Row $indent={41}>
                <ArrowSlot $w={19}><Tri /></ArrowSlot>
                <Chip><Eye /><IconGap $ml={10}><Folder /></IconGap><Label $ml={15}>Origin</Label></Chip>
              </Row>
              <Row $indent={41}>
                <ArrowSlot $w={19}><Tri open /></ArrowSlot>
                <Chip><Eye /><IconGap $ml={10}><Folder /></IconGap><Label $ml={15}>Bodies</Label></Chip>
              </Row>
              {BODIES.map(b => (
                <Row key={b} $indent={79}>
                  <Chip><Eye /><IconGap $ml={10}><Body /></IconGap><Label $ml={14}>{b}</Label></Chip>
                </Row>
              ))}
              <Row $indent={41}>
                <ArrowSlot $w={19}><Tri open /></ArrowSlot>
                <Chip><Eye /><IconGap $ml={10}><Folder /></IconGap><Label $ml={15}>Sketches</Label></Chip>
              </Row>
              {SKETCHES.map(([n, edit, off]) => (
                <Row key={n} $indent={79}>
                  <Chip>
                    <Eye off={off} />
                    <IconGap $ml={10}>{edit ? <SketchEdit /> : <SketchLock />}</IconGap>
                    <Label $ml={13}>{n}</Label>
                  </Chip>
                </Row>
              ))}
            </Tree>
          </Side>
          <NavBar>
            {NAV.map(([x, ic]) => <NavSlot key={x} $x={x}>{ic}</NavSlot>)}
          </NavBar>
          <Side>
            <PanelHead $bottom={5}>
              <HeadLabel $ml={18}>COMMENTS</HeadLabel>
              <RoundBtn plus />
            </PanelHead>
          </Side>
        </Workspace>
        <Timeline>
          <Ctl x={17} d="M1 1h2.500v12H1zM13 1v12L4 7z" />
          <Ctl x={43} d="M1 7l7-6v12zM9 3h2v8H9zM12 5h1.500v4H12z" />
          <Ctl x={69} d="M1 0l12 7-12 7z" />
          <Ctl x={95} d="M13 7L6 1v12zM5 3H3v8h2zM2 5H.5v4H2z" />
          <Ctl x={121} d="M13 1h-2.500v12H13zM1 1v12l9-6z" />
          {TL.map(([x, ic]) => <TimeSlot key={x} $x={x}>{ic}</TimeSlot>)}
          <TimeTrack />
          <Marker>
            <Svg w={14} h={34} vb="0 0 14 34"><path d="M0 0h14v3L8.500 11V33h-3V11L0 3z" fill="#555" /></Svg>
          </Marker>
          <TimeSlot $x={1477}><Gear /></TimeSlot>
        </Timeline>
      </Win>
    </>
  );
}
